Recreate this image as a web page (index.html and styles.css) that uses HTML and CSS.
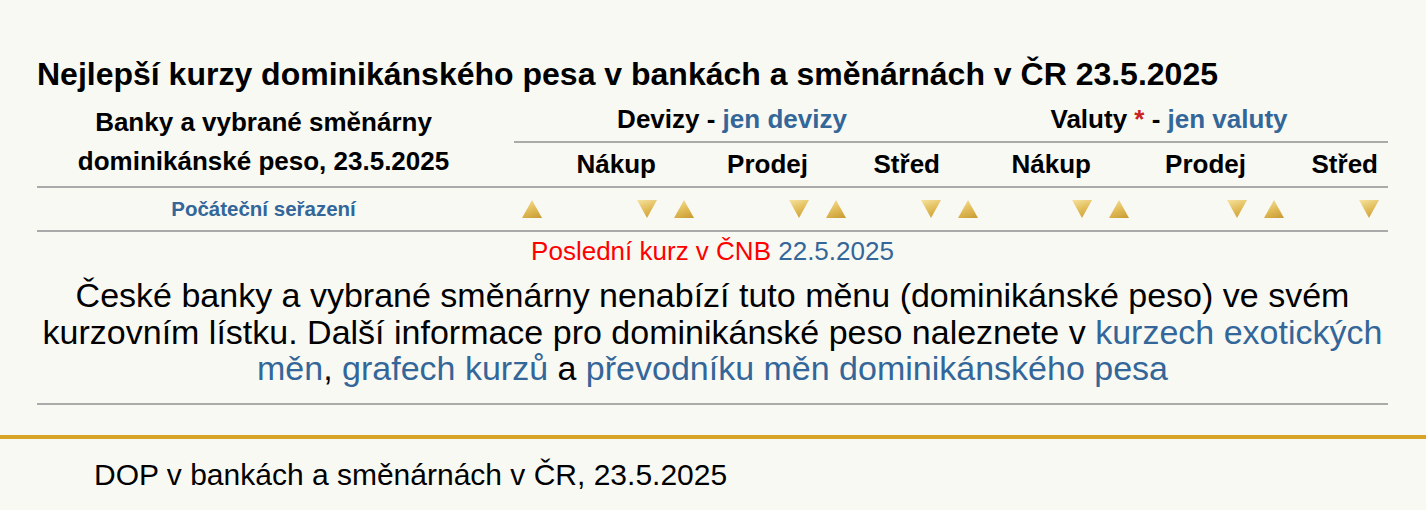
FILE: index.html
```html
<!DOCTYPE html>
<html lang="cs">
<head>
    <meta charset="UTF-8">
    <meta name="viewport" content="width=device-width, initial-scale=1.0">
    <title>Kurzy dominikánského pesa</title>
    <link rel="stylesheet" href="styles.css">
</head>
<body>

<div class="main">
    <h1 class="title">Nejlepší kurzy dominikánského pesa v bankách a směnárnách v ČR 23.5.2025</h1>

    <table class="rates">
        <colgroup>
            <col class="c-bank">
            <col class="c-152">
            <col class="c-152">
            <col class="c-132">
            <col class="c-151">
            <col class="c-155">
            <col class="c-132">
        </colgroup>
        <thead>
            <tr class="row-group">
                <th rowspan="2" class="bank-head">Banky a vybrané směnárny<br>dominikánské peso, 23.5.2025</th>
                <th colspan="3" class="group">Devizy - <a href="#">jen devizy</a></th>
                <th colspan="3" class="group">Valuty <span class="star">*</span> - <a href="#">jen valuty</a></th>
            </tr>
            <tr class="row-cols">
                <th class="col">Nákup</th>
                <th class="col">Prodej</th>
                <th class="col">Střed</th>
                <th class="col">Nákup</th>
                <th class="col">Prodej</th>
                <th class="col">Střed</th>
            </tr>
            <tr class="row-sort">
                <td class="reset"><a href="#">Počáteční seřazení</a></td>
                <td><div class="arrows"><span class="arr up"></span><span class="arr down"></span></div></td>
                <td><div class="arrows"><span class="arr up"></span><span class="arr down"></span></div></td>
                <td><div class="arrows"><span class="arr up"></span><span class="arr down"></span></div></td>
                <td><div class="arrows"><span class="arr up"></span><span class="arr down"></span></div></td>
                <td><div class="arrows"><span class="arr up"></span><span class="arr down"></span></div></td>
                <td><div class="arrows"><span class="arr up"></span><span class="arr down"></span></div></td>
            </tr>
        </thead>
        <tbody>
            <tr>
                <td colspan="7" class="info">
                    <div class="cnb"><span class="red">Poslední kurz v ČNB</span> <a href="#">22.5.2025</a></div>
                    <p class="note">České banky a vybrané směnárny nenabízí tuto měnu (dominikánské peso) ve svém kurzovním lístku. Další informace pro dominikánské peso naleznete v <a href="#">kurzech exotických měn</a>, <a href="#">grafech kurzů</a> a <a href="#">převodníku měn dominikánského pesa</a></p>
                </td>
            </tr>
        </tbody>
    </table>
</div>

<div class="footer">
    <div class="footer-title">DOP v bankách a směnárnách v ČR, 23.5.2025</div>
</div>

</body>
</html>
```

FILE: styles.css
```css
body {
    font-family: "Liberation Sans", Arial, sans-serif;
    margin: 0;
    padding: 0;
    background-color: #f9f9f4;
    color: #000;
}

a {
    color: #336699;
    text-decoration: none;
}

.main {
    padding: 0 38px 0 37px;
}

.title {
    font-size: 32px;
    font-weight: bold;
    margin: 0;
    padding-top: 56px;
    line-height: 36px;
}

.rates {
    width: 100%;
    border-collapse: collapse;
    table-layout: fixed;
    margin-top: 4px;
}

.c-bank { width: 477px; }
.c-152 { width: 152px; }
.c-132 { width: 132px; }
.c-151 { width: 151px; }
.c-155 { width: 155px; }

th, td {
    padding: 0;
}

.bank-head {
    font-size: 26px;
    line-height: 39px;
    text-align: center;
    border-bottom: 2px solid #aaa;
    padding: 2px 24px 0 0;
}

.row-group {
    height: 46px;
}

.group {
    font-size: 26px;
    text-align: center;
    border-bottom: 2px solid #aaa;
    vertical-align: middle;
    padding-top: 2px;
}

.star {
    color: #cc2222;
}

.row-cols {
    height: 45px;
}

.col {
    font-size: 26px;
    text-align: right;
    padding-right: 10px;
    border-bottom: 2px solid #aaa;
}

.row-sort {
    height: 44px;
}

.row-sort td {
    border-bottom: 2px solid #aaa;
    vertical-align: middle;
}

.reset {
    text-align: center;
    font-size: 20.5px;
    font-weight: bold;
    padding-right: 24px;
}

.arrows {
    display: flex;
    justify-content: space-between;
    padding: 0 9px 0 8px;
}

.arr {
    display: block;
    width: 20px;
    height: 18px;
    background: linear-gradient(160deg, #f6e3a0 0%, #e2bd5a 50%, #c89a30 100%);
}

.arr.up {
    clip-path: polygon(50% 0, 100% 100%, 0 100%);
}

.arr.down {
    clip-path: polygon(0 0, 100% 0, 50% 100%);
}

.info {
    text-align: center;
    border-bottom: 2px solid #aaa;
    padding: 6px 0 16px;
}

.cnb {
    font-size: 26px;
    line-height: 26px;
}

.red {
    color: #ff0000;
}

.note {
    font-size: 34px;
    line-height: 36.5px;
    margin: 13px 0 0;
}

.footer {
    margin-top: 30px;
    border-top: 4px solid #d8a427;
}

.footer-title {
    font-size: 30px;
    padding: 19px 0 0 94px;
}
```
